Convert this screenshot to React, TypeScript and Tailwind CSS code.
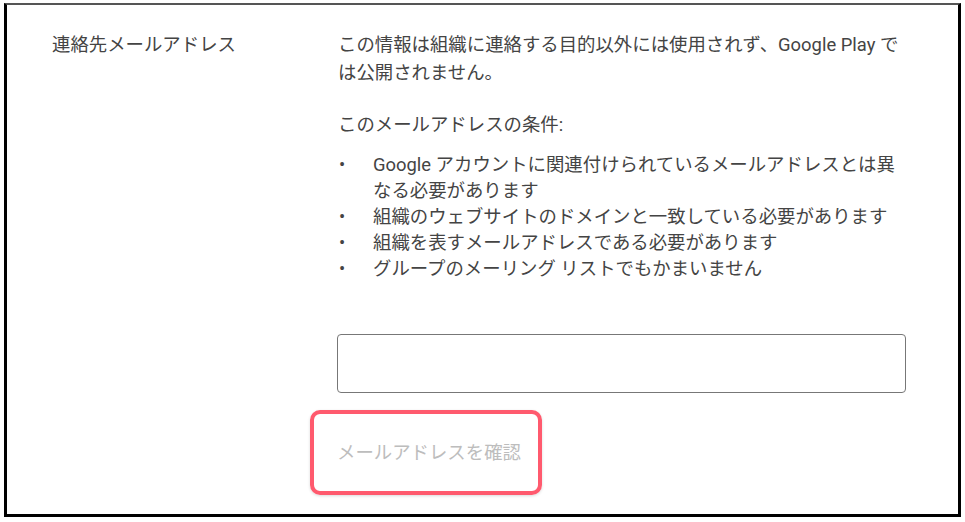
const font = { fontFamily: 'Roboto, "Noto Sans CJK JP", sans-serif' }

const conditions = [
  'Google アカウントに関連付けられているメールアドレスとは異なる必要があります',
  '組織のウェブサイトのドメインと一致している必要があります',
  '組織を表すメールアドレスである必要があります',
  'グループのメーリング リストでもかまいません',
]

export default function App() {
  return (
    <div className="w-[965px] h-[522px] bg-white" style={font}>
      <div className="ml-[4px] mt-[3px] w-[957px] h-[514px] border-[3px] border-t-2 border-black border-t-[#555] bg-white">
        <div className="flex pt-[26px] pl-[45px] text-[18.4px] text-[#444]">
          {/* Label */}
          <div className="w-[286px] shrink-0 leading-[28px]">連絡先メールアドレス</div>

          {/* Content */}
          <div className="w-[566px]">
            <p className="leading-[28px]">
              この情報は組織に連絡する目的以外には使用されず、Google Play では公開されません。
            </p>
            <p className="mt-[24px] leading-[28px]">このメールアドレスの条件:</p>
            <ul className="mt-[13px] leading-[26px]">
              {conditions.map(c => (
                <li key={c} className="flex">
                  <span className="w-[35px] shrink-0 pl-[1px]">•</span>
                  <span className="w-[540px]">{c}</span>
                </li>
              ))}
            </ul>

            <input
              type="text"
              className="mt-[52px] -ml-[1px] block w-[569px] h-[59px] rounded-[4px] border border-[#777] bg-white outline-none"
            />

            {/* Highlighted verify button */}
            <div className="mt-[17px] -ml-[28px] w-[232px] h-[85px] rounded-[10px] border-4 border-[#ff5a6e] shadow-[0_1px_3px_rgba(0,0,0,0.15)] flex items-center pl-[23px]">
              <button className="text-[18.4px] text-[#bdbdbd] leading-[28px]">メールアドレスを確認</button>
            </div>
          </div>
        </div>
      </div>
    </div>
  )
}
